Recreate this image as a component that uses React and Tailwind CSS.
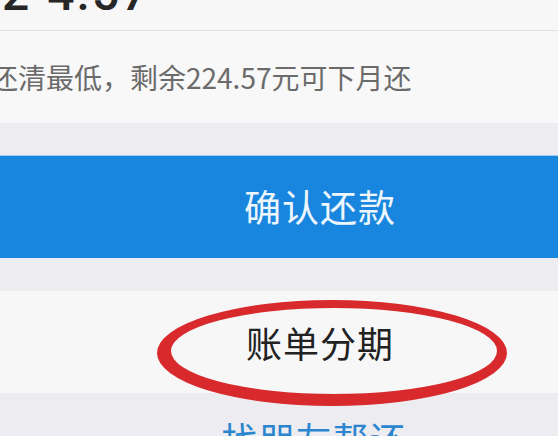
import React from 'react';

const cjk = { fontFamily: '"Noto Sans CJK SC", "Noto Sans", sans-serif' };

export default function App() {
    return (
        <div className="relative w-[558px] h-[436px] overflow-hidden bg-[#ececf1]" style={cjk}>
            {/* amount, cut off at the top of the crop */}
            <div className="h-[31px] overflow-hidden bg-[#f7f7f7] border-b border-[#e2e2e4]">
                <div className="-mt-[30px] ml-[2px] flex items-end text-[48px] leading-[48px] font-medium text-[#262626]" style={{ fontFamily: 'Roboto, "Noto Sans", sans-serif' }}>
                    <span className="mr-[18px]">2</span>
                    <span className="tracking-[2px]">4.57</span>
                </div>
            </div>

            <div className="h-[92px] flex items-center bg-[#f8f8f8]">
                <span className="-ml-[10px] text-[28px] text-[#6b6b6b] whitespace-nowrap">还清最低，剩余224.57元可下月还</span>
            </div>

            <div className="h-[32px]" />

            <button className="w-full h-[103px] flex items-center justify-center pl-[82px] bg-[#1886de] border-t border-[#9ccdf2]">
                <span className="text-[37px] text-[#eef6fd] tracking-[1px]">确认还款</span>
            </button>

            <div className="h-[33px]" />

            <div className="h-[102px] flex items-center justify-center pl-[82px] bg-[#f7f7f7]">
                <span className="text-[36px] text-[#222222] tracking-[1px]">账单分期</span>
            </div>

            <div className="pt-[27px] flex justify-center pl-[70px]">
                <span className="text-[36px] leading-[36px] text-[#2b86cf] tracking-[1px]">找朋友帮还</span>
            </div>

            {/* hand-drawn red circle over the row */}
            <svg className="absolute left-0 top-0 pointer-events-none" width="558" height="436" viewBox="0 0 558 436">
                <path
                    fillRule="evenodd"
                    fill="#d82a2c"
                    d="M157 353 A175 53 0 1 0 507 353 A175 53 0 1 0 157 353 Z M171 351 A163 43 0 1 0 497 351 A163 43 0 1 0 171 351 Z"
                />
            </svg>
        </div>
    );
}
